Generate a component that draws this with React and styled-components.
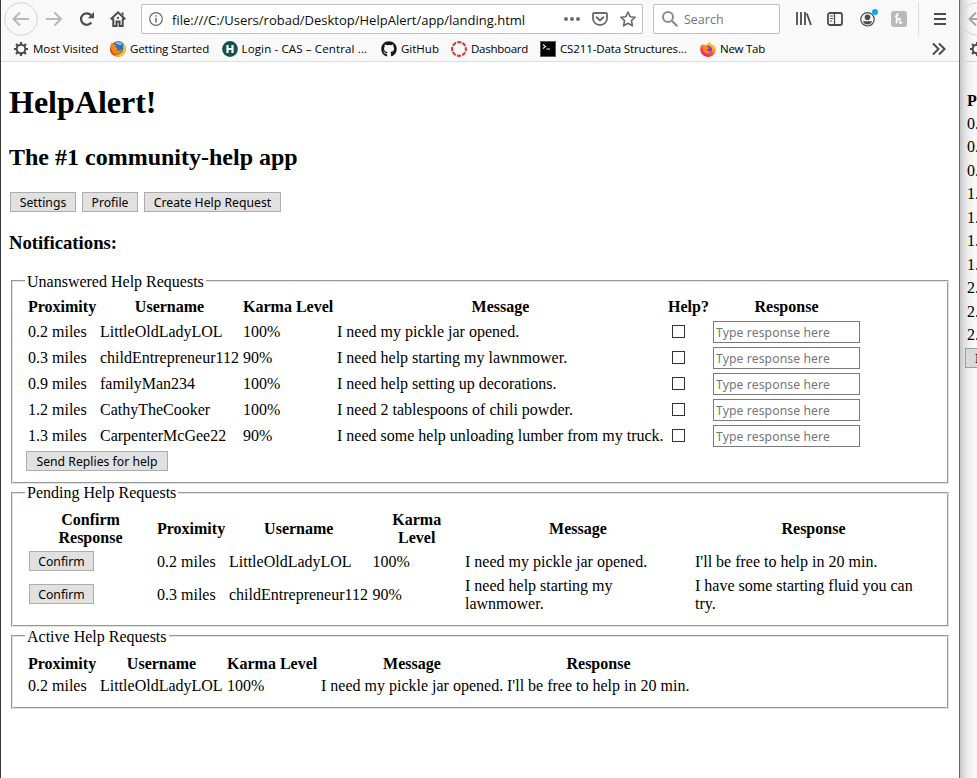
import React from "react";
import styled, { createGlobalStyle } from "styled-components";
import { FaGithub } from "react-icons/fa";

const SERIF = '"Liberation Serif", "Times New Roman", serif';
const UI = '"Open Sans", "Segoe UI", sans-serif';
const CONTROL = '"Noto Sans", Tahoma, sans-serif';

const GlobalStyle = createGlobalStyle`
  * { box-sizing: border-box; }
  body { margin: 0; background: #fff; color: #000; overflow: hidden; font: 16px/18px ${SERIF}; }
`;

/* ---------- windows ---------- */
const Desktop = styled.div`
  display: flex;
  width: 977px;
  height: 778px;
  overflow: hidden;
`;
const BrowserWindow = styled.div`
  width: 960px;
  flex: none;
  border-left: 1px solid #38383a;
  border-right: 1px solid #64686a;
  background: #fff;
`;
const Chrome = styled.header`
  height: 62px;
  background: #f9f9fa;
  border-bottom: 1px solid #dedede;
`;
const NavBar = styled.div`
  display: flex;
  align-items: center;
  height: 38px;
`;
const NavIcon = styled.svg`
  display: block;
  flex: none;
  width: ${(p) => p.$w}px;
  height: ${(p) => p.$h || p.$w}px;
  margin-left: ${(p) => p.$gap || 0}px;
  overflow: visible;
  fill: none;
  stroke: ${(p) => p.$color || "#4a4a4f"};
  stroke-width: 2;
`;
const FieldBox = styled.div`
  display: flex;
  align-items: center;
  flex: none;
  width: ${(p) => p.$w}px;
  height: 30px;
  margin-left: ${(p) => p.$gap}px;
  border: 1px solid #bfbfc0;
  border-radius: 2px;
  background: #fff;
  font: ${(p) => p.$size}px/28px ${UI};
  color: ${(p) => p.$color};
  white-space: nowrap;
`;
const FieldText = styled.span`
  flex: 1;
  padding: 2px 0 0 ${(p) => p.$left}px;
`;
const EndGap = styled.span`
  width: 6px;
  flex: none;
`;
const Spacer = styled.span`
  flex: 1;
`;
const Divider = styled.i`
  width: 1px;
  height: 34px;
  margin: 0 0 0 11px;
  background: #dcdcdd;
`;
const Bookmarks = styled.nav`
  display: flex;
  align-items: center;
  height: 22px;
  padding-left: 12px;
  font: 11.5px/20px ${UI};
  white-space: nowrap;
`;
const Bookmark = styled.a`
  display: flex;
  align-items: center;
  gap: 4px;
  flex: none;
  width: ${(p) => p.$w}px;
  letter-spacing: ${(p) => p.$ls || 0}px;
`;

/* ---------- page ---------- */
const Page = styled.main`
  padding: 0 10px 0 8px;
`;
const H1 = styled.h1`
  margin: 21px 0 0;
  font-size: 32px;
  line-height: 38px;
`;
const H2 = styled.h2`
  margin: 22px 0 0;
  font-size: 24px;
  line-height: 28px;
`;
const H3 = styled.h3`
  margin: 20px 0 0;
  font-size: 18.72px;
  line-height: 22px;
`;
const ButtonRow = styled.div`
  display: flex;
  gap: 6px;
  margin: 21px 0 0 1px;
`;
const Button = styled.button`
  display: block;
  width: ${(p) => p.$w}px;
  height: 20px;
  margin: 0;
  padding: 1px 0 0;
  border: 1px solid #adadad;
  border-radius: 0;
  background: #e1e1e1;
  color: #000;
  font: 12.2px/17px ${CONTROL};
  letter-spacing: 0.02px;
  white-space: nowrap;
  text-align: center;
`;
const Group = styled.section`
  height: ${(p) => p.$h}px;
  margin: ${(p) => p.$gap}px 0 0 2px;
  padding-left: 14px;
  border: 1px solid;
  border-color: #989898 #e2e2e2 #e2e2e2 #989898;
  box-shadow: inset 1px 1px #e2e2e2, inset -1px -1px #989898;
`;
const Legend = styled.div`
  width: max-content;
  height: 18px;
  margin: ${(p) => -(p.$rise || 8)}px 0 ${(p) => p.$below}px -1px;
  padding: 0 2px;
  background: #fff;
`;
const Table = styled.table`
  table-layout: fixed;
  width: ${(p) => p.$w}px;
  margin-left: 2px;
  border-collapse: collapse;
  line-height: 18px;
`;
const Col = styled.col`
  width: ${(p) => p.$w}px;
`;
const Row = styled.tr`
  height: ${(p) => p.$h}px;
`;
const Th = styled.th`
  padding: 0 4px ${(p) => p.$bottom || 0}px 0;
  vertical-align: middle;
  white-space: nowrap;
`;
const ThWrap = styled(Th)`
  padding: 0 ${(p) => (p.$side || 0) + 4}px 0 ${(p) => p.$side || 0}px;
  white-space: normal;
`;
const Td = styled.td`
  padding: 0;
  vertical-align: middle;
`;
const Check = styled.input`
  appearance: none;
  display: block;
  width: 13px;
  height: 13px;
  margin: -1px 0 0 4px;
  border: 1px solid #333;
  background: #fff;
`;
const Reply = styled.input`
  display: block;
  width: 147px;
  height: 22px;
  margin: 0;
  padding: 0 2px;
  border: 1px solid #7a7a7a;
  border-radius: 0;
  font: 12.2px/18px ${CONTROL};
  letter-spacing: 0.1px;
  &::placeholder { color: #767676; opacity: 1; }
`;
const ButtonSlot = styled.div`
  padding: ${(p) => p.$top || 0}px 0 ${(p) => p.$bottom || 0}px ${(p) => p.$left || 0}px;
`;

/* ---------- window behind, at the right edge ---------- */
const BackWindow = styled.aside`
  flex: 1;
  overflow: hidden;
  background: linear-gradient(90deg, #c4c4c4 0, #dedede 4px, #f0f0f0 9px, #fcfcfc 17px);
`;
const BackChrome = styled.div`
  height: 62px;
  border-bottom: 1px solid #d2d2d2;
`;
const BackList = styled.div`
  height: 286px;
  padding: 27px 0 0 7px;
  line-height: 23.5px;
`;
const BackRows = styled.div`
  margin-top: -1px;
`;
const BackButton = styled(Button)`
  margin: 0 0 0 5px;
  padding-left: 9px;
  text-align: left;
  background: #d9d9d9;
  border-color: #9b9b9b;
  color: #400010;
`;

const BackArrow = ({ color }) => (
  <>
    <circle cx="17" cy="17" r="16.3" stroke="#d3d3d4" strokeWidth="1" />
    <path d="M25 17H10M16 10.5L9.5 17l6.500 6.500" stroke={color} />
  </>
);
const GearShape = () => (
  <g stroke="#4a4a4f">
    <circle cx="8" cy="8" r="4.300" strokeWidth="2" />
    <path strokeWidth="2.200" d="M8 1v2.600M8 12.400V15M1 8h2.600M12.400 8H15M3.050 3.050l1.800 1.800M11.150 11.150l1.800 1.800M3.050 12.950l1.800-1.800M11.150 4.850l1.800-1.800" />
  </g>
);

const OldFirefox = () => (
  <NavIcon $w={16} viewBox="0 0 16 16">
    <g stroke="none">
      <circle cx="8" cy="8" r="7.800" fill="#e66a10" />
      <circle cx="8.600" cy="6.300" r="6" fill="#2b72b8" />
      <path d="M5 2.500C7 .6 10.500.5 12.500 2.800L10 4.500 7.500 3.200z" fill="#72c1ea" />
      <path d="M.4 5C.8 3 1.500 2.200 2 1.500l1 2c1.500-.3 2.500 0 3.500.6C5.500 5 5.500 5.800 6 6.500l2 .5-1.500 1.800c.8 1.500 3.500 1.500 5.500-.8C12 11 9.500 13 6.500 12.500 3 11.500 1 8.500.4 5z" fill="#f08a19" />
      <path d="M13 2.500c3 3 3.500 7.500.8 10.500-2.500 2.800-7 3.500-10.300 1.300 5 .8 9.500-2 9.800-6.800z" fill="#fcc431" />
      <path d="M1 4.500C.3 9 2 13 6 15 2 14.500-.2 11 .1 7.500z" fill="#c9400f" />
    </g>
  </NavIcon>
);
const NewFirefox = () => (
  <NavIcon $w={16} viewBox="0 0 16 16">
    <defs>
      <linearGradient id="flame" x1=".8" y1="0" x2=".25" y2="1">
        <stop offset="0" stopColor="#fff04a" />
        <stop offset=".4" stopColor="#ffa01e" />
        <stop offset=".7" stopColor="#ff4338" />
        <stop offset="1" stopColor="#e8178a" />
      </linearGradient>
    </defs>
    <g stroke="none">
      <path d="M9.500 0c.4 1.700 1.800 2.500 3 3.800L13.200 3C15 5 15.900 6.700 15.800 8.800 15.400 13 12 16 8 16S.3 12.800.2 8.600C.1 6 1 4.300 2 3l.4 1.600L4 2.500l.8 1.700C6.500 4 8.600 2.600 9.500 0z" fill="url(#flame)" />
      <circle cx="8" cy="8.600" r="3.900" fill="#7a35d6" />
      <path d="M3.500 5.500c2-.8 3.700-.3 4.500.8l2 .4c-.8 1.200-2 1-2.800 1.600-.3 1.700 2 2.700 4.100 1.100-.7 2.700-3.500 4-5.800 2.700C3.300 11 2.700 8 3.500 5.500z" fill="#ff8322" />
    </g>
  </NavIcon>
);

function Toolbar() {
  return (
    <NavBar>
      <NavIcon $w={34} $gap={3} viewBox="0 0 34 34"><BackArrow color="#b9b9bb" /></NavIcon>
      <NavIcon $w={16} $gap={8} $color="#b9b9bb" viewBox="0 0 16 16"><path d="M0 8h14.500M8.500 1.500L15 8l-6.500 6.500" /></NavIcon>
      <NavIcon $w={16} $gap={17} viewBox="0 0 16 16">
        <path d="M12.300 11.500A5.700 5.700 0 1 1 12 4.300" strokeWidth="2.200" />
        <path d="M15 1v6.200H8.800z" fill="#4a4a4f" stroke="none" />
      </NavIcon>
      <NavIcon $w={16} $gap={15} viewBox="0 0 16 16">
        <path d="M.8 8.300L8 1.300l7.200 7M3.300 7.500V15h3.200v-4.500h3V15h3.200V7.500" />
        <path d="M11.500 1.500h2V5l-2-2zM7 6h2v2H7z" fill="#4a4a4f" stroke="none" />
      </NavIcon>
      <FieldBox $w={502} $gap={15} $size={13} $color="#0c0c0d">
        <NavIcon $w={14} $gap={7} $color="#6b6b6e" viewBox="0 0 14 14">
          <circle cx="7" cy="7" r="6.300" strokeWidth="1.200" /><path d="M7 6v4.500M7 3.300v1.500" strokeWidth="1.500" />
        </NavIcon>
        <FieldText $left={9}>file:///C:/Users/robad/Desktop/HelpAlert/app/landing.html</FieldText>
        <NavIcon $w={16} $h={4} viewBox="0 0 16 4">
          <g fill="#6b6b6e" stroke="none"><circle cx="2" cy="2" r="2" /><circle cx="8" cy="2" r="2" /><circle cx="14" cy="2" r="2" /></g>
        </NavIcon>
        <NavIcon $w={16} $gap={12} $color="#6b6b6e" viewBox="0 0 16 16">
          <path d="M2 2h12q1 0 1 1v4.500a7 6.500 0 0 1-14 0V3q0-1 1-1z" strokeWidth="1.800" /><path d="M4.600 6.300L8 9.500l3.400-3.200" strokeWidth="2" strokeLinecap="round" />
        </NavIcon>
        <NavIcon $w={16} $gap={12} $color="#6b6b6e" viewBox="0 0 16 16">
          <path d="M8 1l2.100 4.700 5.100.5-3.800 3.500 1.100 5.100L8 12.200l-4.500 2.600 1.100-5.100L.8 6.200l5.100-.5z" strokeWidth="1.600" strokeLinejoin="round" />
        </NavIcon>
        <EndGap />
      </FieldBox>
      <FieldBox $w={127} $gap={10} $size={12.5} $color="#757575">
        <NavIcon $w={16} $gap={8} $color="#8d8d90" viewBox="0 0 16 16"><circle cx="6" cy="6" r="5" /><path d="M9.700 9.700l5.600 5.600" strokeWidth="2.300" /></NavIcon>
        <FieldText $left={6}>Search</FieldText>
      </FieldBox>
      <NavIcon $w={16} $gap={16} viewBox="0 0 16 16"><path d="M1 1v13M5 1v13M9 1v13M10.800 2.500L15 14" strokeWidth="1.800" /></NavIcon>
      <NavIcon $w={16} $gap={15} viewBox="0 0 16 16">
        <rect x="1" y="2" width="14" height="12" rx="2" strokeWidth="1.800" /><path d="M7.500 2v12" strokeWidth="1.300" /><path d="M3 5h3M3 7.500h3M3 10h2" strokeWidth="1" />
      </NavIcon>
      <NavIcon $w={16} $gap={17} viewBox="0 0 16 16">
        <circle cx="7.500" cy="8.300" r="6.700" strokeWidth="1.200" />
        <circle cx="7.500" cy="6.300" r="2.800" fill="#4a4a4f" stroke="none" /><path d="M2.800 10.300h9.400c-1 2.200-2.700 3.200-4.700 3.200s-3.700-1-4.700-3.200z" fill="#4a4a4f" stroke="none" />
        <circle cx="15" cy="1" r="3" fill="#00a8f5" stroke="none" />
      </NavIcon>
      <NavIcon $w={16} $gap={15} viewBox="0 0 16 16">
        <rect width="16" height="16" rx="3" fill="#b9b9ba" stroke="none" />
        <path d="M4 5.500C5.500 5.300 7.500 3.500 6.800 2.800 5.800 2.300 5.500 6 5.500 12.500 5.800 9.500 7 7.500 8.500 7.600c1.500.2-.4 4.100.7 4.500.7.200 1.300-.2 1.800-.9" stroke="#fff" strokeWidth="1.500" />
      </NavIcon>
      <Divider />
      <NavIcon $w={12} $h={12} $gap={15} viewBox="0 0 12 12"><path d="M0 1h12M0 6h12M0 11h12" /></NavIcon>
    </NavBar>
  );
}

function BookmarkBar() {
  return (
    <Bookmarks>
      <Bookmark $w={97}><NavIcon $w={16} viewBox="0 0 16 16"><GearShape /></NavIcon>Most Visited</Bookmark>
      <Bookmark $w={111.5} $ls={-0.15}><OldFirefox />Getting Started</Bookmark>
      <Bookmark $w={159.5} $ls={0.14}>
        <NavIcon $w={16} viewBox="0 0 16 16"><circle cx="8" cy="8" r="7.900" fill="#15524f" stroke="none" /><path d="M5.500 4v8M10.500 4v8M5.500 8h5" stroke="#fff" strokeWidth="2.200" /></NavIcon>
        Login - CAS – Central ...
      </Bookmark>
      <Bookmark $w={70}><FaGithub size={16} color="#191717" />GitHub</Bookmark>
      <Bookmark $w={89} $ls={-0.25}>
        <NavIcon $w={16} viewBox="0 0 16 16"><circle cx="8" cy="8" r="6.900" stroke="#e13a2e" strokeWidth="2.100" strokeDasharray="4.200 1.219" strokeDashoffset="2.100" /></NavIcon>
        Dashboard
      </Bookmark>
      <Bookmark $w={160} $ls={-0.13}>
        <NavIcon $w={16} viewBox="0 0 16 16"><rect x=".5" y=".5" width="15" height="15" fill="#000" stroke="#55585a" strokeWidth="1" /><path d="M3 3.500l2.500 2L3 7.500M6.500 8H10" stroke="#fff" strokeWidth="1.100" /></NavIcon>
        CS211-Data Structures...
      </Bookmark>
      <Bookmark $w={80} $ls={-0.25}><NewFirefox />New Tab</Bookmark>
      <Spacer />
      <NavIcon $w={27} $h={12} viewBox="0 0 27 12"><path d="M1 .5L6.500 6 1 11.500M7 .5L12.500 6 7 11.500" /></NavIcon>
    </Bookmarks>
  );
}

const requests = [
  ["0.2 miles", "LittleOldLadyLOL", "100%", "I need my pickle jar opened."],
  ["0.3 miles", "childEntrepreneur112", "90%", "I need help starting my lawnmower."],
  ["0.9 miles", "familyMan234", "100%", "I need help setting up decorations."],
  ["1.2 miles", "CathyTheCooker", "100%", "I need 2 tablespoons of chili powder."],
  ["1.3 miles", "CarpenterMcGee22", "90%", "I need some help unloading lumber from my truck."],
];
const pending = [
  [26, "0.2 miles", "LittleOldLadyLOL", "100%", "I need my pickle jar opened.", "I'll be free to help in 20 min."],
  [40, "0.3 miles", "childEntrepreneur112", "90%", "I need help starting my lawnmower.", "I have some starting fluid you can try."],
];
const Columns = ({ widths }) => <colgroup>{widths.map((w, i) => <Col key={i} $w={w} />)}</colgroup>;

function Unanswered() {
  return (
    <Group $h={204} $gap={26}>
      <Legend $below={7}>Unanswered Help Requests</Legend>
      <Table $w={836}>
        <Columns widths={[72, 143, 94, 331, 45, 151]} />
        <tbody>
          <Row $h={21}>
            {["Proximity", "Username", "Karma Level", "Message", "Help?", "Response"].map((t) => <Th key={t} $bottom={3}>{t}</Th>)}
          </Row>
          {requests.map((r) => (
            <Row key={r[0]} $h={26}>
              {r.map((t) => <Td key={t}>{t}</Td>)}
              <Td><Check type="checkbox" /></Td>
              <Td><Reply placeholder="Type response here" /></Td>
            </Row>
          ))}
        </tbody>
      </Table>
      <ButtonSlot $top={2}><Button $w={142}>Send Replies for help</Button></ButtonSlot>
    </Group>
  );
}
function Pending() {
  return (
    <Group $h={135} $gap={8}>
      <Legend $rise={9} $below={7}>Pending Help Requests</Legend>
      <Table $w={908}>
        <Columns widths={[129, 72, 143.5, 92.5, 230, 241]} />
        <tbody>
          <Row $h={40}>
            <ThWrap $side={24}>Confirm Response</ThWrap>
            <Th>Proximity</Th>
            <Th>Username</Th>
            <ThWrap>Karma Level</ThWrap>
            <Th>Message</Th>
            <Th>Response</Th>
          </Row>
          {pending.map(([h, ...cells]) => (
            <Row key={cells[0]} $h={h}>
              <Td><ButtonSlot $left={1} $bottom={2}><Button $w={65}>Confirm</Button></ButtonSlot></Td>
              {cells.map((t) => <Td key={t}>{t}</Td>)}
            </Row>
          ))}
        </tbody>
      </Table>
    </Group>
  );
}
function Active() {
  return (
    <Group $h={74} $gap={8}>
      <Legend $below={7}>Active Help Requests</Legend>
      <Table $w={666}>
        <Columns widths={[72, 127, 94, 186, 187]} />
        <tbody>
          <Row $h={22}>
            {["Proximity", "Username", "Karma Level", "Message", "Response"].map((t) => <Th key={t}>{t}</Th>)}
          </Row>
          <Row $h={22}>
            {pending[0].slice(1).map((t) => <Td key={t}>{t}</Td>)}
          </Row>
        </tbody>
      </Table>
    </Group>
  );
}

export default function App() {
  return (
    <Desktop>
      <GlobalStyle />
      <BrowserWindow>
        <Chrome><Toolbar /><BookmarkBar /></Chrome>
        <Page>
          <H1>HelpAlert!</H1>
          <H2>The #1 community-help app</H2>
          <ButtonRow>
            <Button $w={66}>Settings</Button>
            <Button $w={56}>Profile</Button>
            <Button $w={137}>Create Help Request</Button>
          </ButtonRow>
          <H3>Notifications:</H3>
          <Unanswered />
          <Pending />
          <Active />
        </Page>
      </BrowserWindow>
      <BackWindow>
        <BackChrome>
          <NavIcon $w={34} $h={38} viewBox="0 -2 34 38"><BackArrow color="#a5a5a6" /></NavIcon>
          <NavIcon $w={16} $h={22} $gap={9} viewBox="0 -3 16 22"><GearShape /></NavIcon>
        </BackChrome>
        <BackList>
          <b>P</b>
          <BackRows>
            {["0.", "0.", "0.", "1.", "1.", "1.", "1.", "2.", "2.", "2."].map((d, i) => <div key={i}>{d}</div>)}
          </BackRows>
        </BackList>
        <BackButton $w={65}>I</BackButton>
      </BackWindow>
    </Desktop>
  );
}
